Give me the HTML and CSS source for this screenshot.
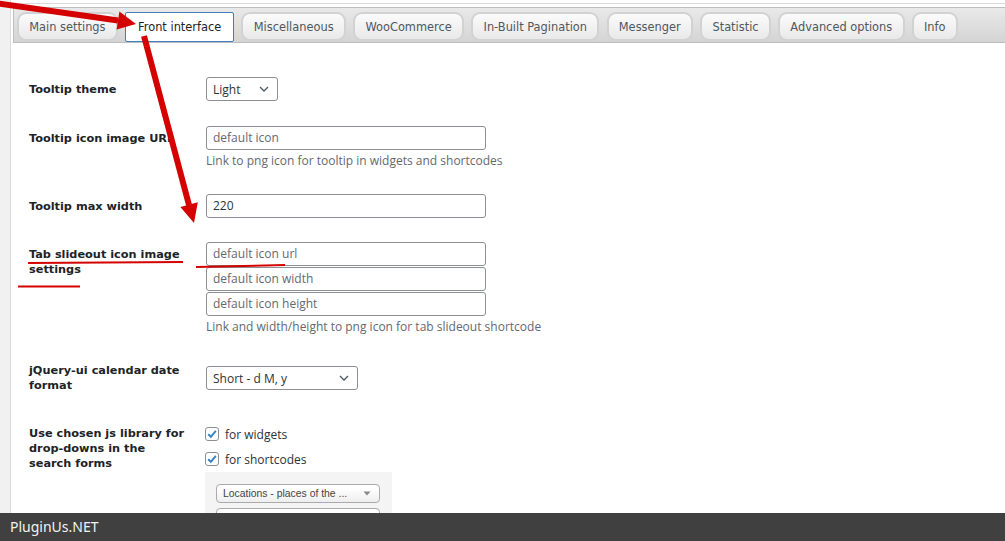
FILE: index.html
```html
<!DOCTYPE html>
<html>
<head>
<meta charset="utf-8">
<title>Front interface</title>
<link rel="stylesheet" href="styles.css">
</head>
<body>
<div class="page">
  <div class="side"></div>
  <div class="main">
    <div class="topline"></div>
    <nav class="tabs">
      <span class="tab">Main settings</span>
      <span class="tab active">Front interface</span>
      <span class="tab">Miscellaneous</span>
      <span class="tab">WooCommerce</span>
      <span class="tab">In-Built Pagination</span>
      <span class="tab">Messenger</span>
      <span class="tab">Statistic</span>
      <span class="tab">Advanced options</span>
      <span class="tab">Info</span>
    </nav>

    <div class="form">
      <div class="row r1">
        <div class="label">Tooltip theme</div>
        <div class="field">
          <div class="select sel-light"><span>Light</span><svg class="chev" width="10" height="6" viewBox="0 0 10 6"><path d="M1 1 L5 5 L9 1" fill="none" stroke="#50575e" stroke-width="1.3"/></svg></div>
        </div>
      </div>

      <div class="row r2">
        <div class="label">Tooltip icon image URL</div>
        <div class="field">
          <div class="input ph">default icon</div>
          <div class="desc">Link to png icon for tooltip in widgets and shortcodes</div>
        </div>
      </div>

      <div class="row r3">
        <div class="label">Tooltip max width</div>
        <div class="field">
          <div class="input">220</div>
        </div>
      </div>

      <div class="row r4">
        <div class="label">Tab slideout icon image settings</div>
        <div class="field">
          <div class="input ph">default icon url</div>
          <div class="input ph stack">default icon width</div>
          <div class="input ph stack">default icon height</div>
          <div class="desc">Link and width/height to png icon for tab slideout shortcode</div>
        </div>
      </div>

      <div class="row r5">
        <div class="label tight">jQuery-ui calendar date format</div>
        <div class="field">
          <div class="select sel-date"><span>Short - d M, y</span><svg class="chev" width="10" height="6" viewBox="0 0 10 6"><path d="M1 1 L5 5 L9 1" fill="none" stroke="#50575e" stroke-width="1.3"/></svg></div>
        </div>
      </div>

      <div class="row r6">
        <div class="label flat">Use chosen js library for drop-downs in the search forms</div>
        <div class="field">
          <div class="check"><svg width="14" height="14" viewBox="0 0 14 14"><rect x="0.5" y="0.5" width="13" height="13" rx="2.5" fill="#fff" stroke="#8c8f94"/><path d="M3.2 7.2 L5.9 9.8 L10.8 3.8" fill="none" stroke="#3582c4" stroke-width="1.9"/></svg><span>for widgets</span></div>
          <div class="check second"><svg width="14" height="14" viewBox="0 0 14 14"><rect x="0.5" y="0.5" width="13" height="13" rx="2.5" fill="#fff" stroke="#8c8f94"/><path d="M3.2 7.2 L5.9 9.8 L10.8 3.8" fill="none" stroke="#3582c4" stroke-width="1.9"/></svg><span>for shortcodes</span></div>
          <div class="chosen-box">
            <div class="chosen"><span>Locations - places of the ...</span><svg width="8" height="5" viewBox="0 0 8 5"><path d="M0.5 0.5 L7.5 0.5 L4 4.5 Z" fill="#888"/></svg></div>
            <div class="chosen next"></div>
          </div>
        </div>
      </div>
    </div>
  </div>
</div>

<div class="footer">PluginUs.NET</div>

<svg class="annot" width="1005" height="541" viewBox="0 0 1005 541">
  <g stroke="#d50000" fill="none" stroke-linecap="butt">
    <line x1="-2" y1="3.5" x2="118" y2="20.5" stroke-width="6"/>
    <line x1="144" y1="36" x2="189" y2="205" stroke-width="6"/>
    <path d="M28 263 L183 262" stroke-width="2"/>
    <path d="M18 286.5 L80 286.5" stroke-width="2"/>
    <path d="M196 267 L285 265" stroke-width="2"/>
  </g>
  <g fill="#d50000">
    <polygon points="136,24 116.6,29.4 119.4,11.6"/>
    <polygon points="194,223 180.4,206.9 197.8,202.3"/>
  </g>
</svg>
</body>
</html>
```

FILE: styles.css
```css
html, body {
  margin: 0;
  padding: 0;
  background: #fff;
  overflow: hidden;
}

body {
  font-family: "DejaVu Sans", Verdana, sans-serif;
  color: #1d2327;
  width: 1005px;
  height: 541px;
}

.page {
  display: flex;
  height: 541px;
}

.side {
  flex: none;
  width: 10px;
  background: #f1f1f1;
  border-right: 1px solid #dcdcdc;
}

.main {
  flex: 1;
  min-width: 0;
}

.topline {
  height: 3px;
  border-bottom: 1px solid #dadada;
}

.tabs {
  margin: 3px 0 0 2px;
  display: flex;
  align-items: flex-start;
  gap: 7.2px;
  padding: 4px 0 1px 3px;
  height: 29px;
  box-sizing: content-box;
  border: 1px solid #bdbdbd;
  border-right: none;
  background: linear-gradient(#e9e9e9, #d4d4d4);
}

.tab {
  flex: none;
  border: 2px solid #d2d2d2;
  border-radius: 9px;
  background: linear-gradient(#fbfbfb, #e9e9e9);
  padding: 1px 10.3px 0;
  line-height: 24px;
  font-size: 11.4px;
  color: #50575e;
  white-space: nowrap;
}

.tab.active {
  background: #fff;
  border: 1px solid #3f80ba;
  border-radius: 2px;
  padding: 1px 12px 0;
  line-height: 27px;
  color: #1d2327;
}

/* form */
.row {
  display: flex;
  align-items: flex-start;
}

.r1 { padding-top: 34px; }
.r2 { padding-top: 25px; }
.r3 { padding-top: 25px; }
.r4 { padding-top: 24px; }
.r5 { padding-top: 31px; }
.r6 { padding-top: 33px; }

.label {
  flex: none;
  width: 158px;
  padding: 5px 19px 0 18px;
  font-size: 11.3px;
  font-weight: bold;
  line-height: 15px;
  color: #1d2327;
}

.label.tight {
  padding-top: 0;
  margin-top: -3px;
}

.label.flat {
  padding-top: 0;
}

.field {
  flex: none;
  width: 400px;
}

.input {
  box-sizing: border-box;
  width: 280px;
  height: 24px;
  border: 1px solid #8c8f94;
  border-radius: 3px;
  padding: 0 6px;
  font-family: "Open Sans", "Noto Sans", sans-serif;
  font-size: 12px;
  line-height: 22px;
  color: #2c3338;
  background: #fff;
}

.input.ph {
  color: #646970;
}

.input.stack {
  margin-top: 1px;
}

.desc {
  margin-top: 2px;
  font-family: "Open Sans", "Noto Sans", sans-serif;
  font-size: 12px;
  line-height: 17px;
  color: #646970;
  white-space: nowrap;
}

.select {
  box-sizing: border-box;
  height: 24px;
  border: 1px solid #8c8f94;
  border-radius: 3px;
  padding: 0 8px 0 6px;
  display: flex;
  align-items: center;
  justify-content: space-between;
  font-family: "Open Sans", "Noto Sans", sans-serif;
  font-size: 12px;
  color: #2c3338;
  background: #fff;
}

.sel-light { width: 72px; }
.sel-date { width: 152px; }

.chev {
  display: block;
}

.check {
  display: flex;
  align-items: center;
  gap: 6px;
  height: 16px;
  margin-left: -1px;
  font-family: "Open Sans", "Noto Sans", sans-serif;
  font-size: 12px;
  color: #2c3338;
}

.check svg {
  flex: none;
  display: block;
}

.check.second {
  margin-top: 9px;
}

.chosen-box {
  margin: 5px 0 0 -1px;
  width: 165px;
  height: 60px;
  padding: 12px 11px 0 11px;
  background: #f4f4f4;
}

.chosen {
  box-sizing: border-box;
  width: 164px;
  height: 19px;
  border: 1px solid #aaa;
  border-radius: 4px;
  background: linear-gradient(#ffffff 20%, #eeeeee);
  padding: 0 8px 0 6px;
  display: flex;
  align-items: center;
  justify-content: space-between;
  font-family: "Liberation Sans", Arial, sans-serif;
  font-size: 10.4px;
  color: #444;
  white-space: nowrap;
}

.chosen.next {
  margin-top: 5px;
}

.footer {
  position: fixed;
  left: 0;
  bottom: 0;
  width: 1005px;
  height: 28px;
  box-sizing: border-box;
  padding-left: 10px;
  background: #404040;
  color: #f2f2f2;
  font-family: "Noto Sans", sans-serif;
  font-size: 14px;
  line-height: 28px;
}

.annot {
  position: absolute;
  left: 0;
  top: 0;
  pointer-events: none;
}
```
